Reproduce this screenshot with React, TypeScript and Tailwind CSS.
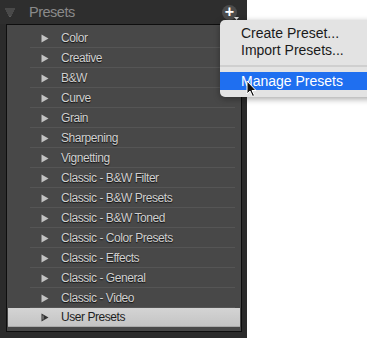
const presets = [
  'Color',
  'Creative',
  'B&W',
  'Curve',
  'Grain',
  'Sharpening',
  'Vignetting',
  'Classic - B&W Filter',
  'Classic - B&W Presets',
  'Classic - B&W Toned',
  'Classic - Color Presets',
  'Classic - Effects',
  'Classic - General',
  'Classic - Video',
];

function Arrow({ dark }: { dark?: boolean }) {
  return (
    <svg width="8" height="9" viewBox="0 0 8 9" className="shrink-0">
      <path d="M0.5 0.5 L7.5 4.5 L0.5 8.5 Z" fill={dark ? '#333' : '#c4c4c4'} />
      {dark && <path d="M2 2.5 L2 6.5" stroke="#bbb" strokeWidth="0.8" />}
    </svg>
  );
}

function DottedTriangle() {
  return (
    <svg width="10" height="9" viewBox="0 0 10 9">
      {[
        [1, 1], [3, 1], [5, 1], [7, 1], [9, 1],
        [2, 3], [4, 3], [6, 3], [8, 3],
        [3, 5], [5, 5], [7, 5],
        [4, 7], [6, 7],
        [5, 8.5],
      ].map(([x, y], i) => (
        <rect key={i} x={x - 0.6} y={y - 0.6} width="1.2" height="1.2" fill="#7a7a7a" />
      ))}
    </svg>
  );
}

function Cursor() {
  return (
    <svg width="12" height="18" viewBox="0 0 12 18">
      <path
        d="M1 1 L1 14 L4 11 L6.5 16.5 L8.5 15.5 L6 10.5 L10 10.5 Z"
        fill="#111"
        stroke="#fff"
        strokeWidth="1"
        strokeLinejoin="round"
      />
    </svg>
  );
}

export default function App() {
  return (
    <div className="relative w-[367px] h-[338px] bg-white overflow-hidden" style={{ fontFamily: '"Liberation Sans", Arial, sans-serif' }}>
      <div className="w-[247px] h-[338px] bg-[#2b2b2b] flex flex-col">
        <div className="h-[24px] flex items-center pl-[5px] pr-[10px] bg-[#2e2e2e]">
          <DottedTriangle />
          <span className="ml-[14px] mt-[1px] text-[14.5px] text-[#8a8a8a] tracking-[-0.5px]">Presets</span>
          <div className="ml-auto relative w-[15px] h-[15px] rounded-full bg-[#4c4c4c] flex items-center justify-center">
            <span className="text-white text-[16px] font-bold leading-none -mt-[1px]">+</span>
            <svg width="5" height="3" viewBox="0 0 5 3" className="absolute right-[-2px] bottom-[0px]">
              <path d="M0 0 L5 0 L2.5 3 Z" fill="#ddd" />
            </svg>
          </div>
        </div>
        <div className="ml-[6px] w-[236px] h-[308px] border border-[#0e0e0e] bg-[#484848] pt-[3px] flex flex-col">
          {presets.map((p) => (
            <div key={p} className="h-[20px] flex items-center relative">
              <div className="pl-[34px] flex items-center">
                <Arrow />
                <span className="ml-[12px] text-[12px] tracking-[-0.45px] text-[#d0d0d0] [text-shadow:0_1px_1px_#111]">{p}</span>
              </div>
              <div className="absolute left-[23px] right-[6px] bottom-0 h-px bg-[#555]" />
            </div>
          ))}
          <div className="h-[19px] mx-[1px] flex items-center bg-gradient-to-b from-[#d4d4d4] to-[#c4c4c4] border-b border-[#aaa]">
            <div className="pl-[33px] flex items-center">
              <Arrow dark />
              <span className="ml-[12px] text-[12px] tracking-[-0.45px] text-[#1e1e1e]">User Presets</span>
            </div>
          </div>
        </div>
      </div>

      <div className="absolute left-[220px] top-[20px] w-[160px] h-[77px] rounded-[5px] bg-[#e3e3e3] shadow-[0_2px_6px_rgba(0,0,0,0.35)] pt-[5px] flex flex-col">
        <div className="h-[17px] pl-[21px] flex items-center text-[14px] text-[#1a1a1a]">Create Preset...</div>
        <div className="h-[17px] pl-[21px] flex items-center text-[14px] text-[#1a1a1a]">Import Presets...</div>
        <div className="h-[13px] flex items-center">
          <div className="w-full h-[2px] bg-[#cfcfcf]" />
        </div>
        <div className="h-[18px] pl-[21px] flex items-center text-[14px] text-white bg-[#1f6ff0]">Manage Presets</div>
      </div>

      <div className="absolute left-[246px] top-[80px]">
        <Cursor />
      </div>
    </div>
  );
}
